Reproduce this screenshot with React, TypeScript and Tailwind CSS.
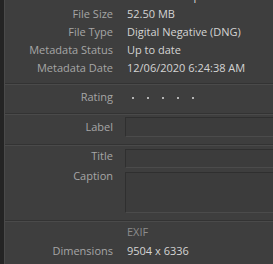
import React from 'react';

// Metadata panel rows (first one sits under the top edge, only its foot shows)
const fileRows = [
  { label: 'Folder', value: 'Pictures Sample' },
  { label: 'File Size', value: '52.50 MB' },
  { label: 'File Type', value: 'Digital Negative (DNG)' },
  { label: 'Metadata Status', value: 'Up to date' },
  { label: 'Metadata Date', value: '12/06/2020 6:24:38 AM' },
];

function Separator() {
  return (
    <div className="flex flex-col">
      <div className="h-px bg-[#333333]" />
      <div className="h-px bg-[#4a4a4a]" />
    </div>
  );
}

function Field({ className }: { className: string }) {
  return (
    <div
      className={`flex-1 border-t border-l border-b border-[#2f2f2f] border-b-[#4b4b4b] bg-[#3c3c3c] ${className}`}
    />
  );
}

export default function App() {
  return (
    <div
      className="flex h-[264px] w-[273px] overflow-hidden bg-[#3e3e3e] text-[11px] leading-[18px]"
      style={{ fontFamily: '"Open Sans", "Noto Sans", sans-serif' }}
    >
      <div className="w-[4px] bg-[#242424]" />
      <div className="w-px bg-[#4a4a4a]" />
      <div className="flex flex-1 flex-col">
        <div className="-mt-[13px] flex flex-col pb-[6px]">
          {fileRows.map(row => (
            <div key={row.label} className="flex h-[18px] items-center">
              <span className="w-[108px] text-right text-[#a6a6a6]">
                {row.label}
              </span>
              <span className="ml-[14px] text-[#d4d4d4]">{row.value}</span>
            </div>
          ))}
        </div>
        <Separator />

        <div className="flex h-[28px] items-start pt-[3px]">
          <span className="w-[108px] text-right text-[#a6a6a6]">Rating</span>
          <div className="ml-[19px] mt-[9px] flex gap-[13px]">
            {[0, 1, 2, 3, 4].map(i => (
              <span key={i} className="h-[2px] w-[2px] bg-[#b4b4b4]" />
            ))}
          </div>
        </div>
        <Separator />

        <div className="flex items-stretch pt-[2px] pb-[7px]">
          <span className="flex w-[108px] items-center justify-end text-[#a6a6a6]">
            Label
          </span>
          <Field className="ml-[12px] h-[20px]" />
        </div>
        <Separator />

        <div className="flex pt-[3px]">
          <span className="-mt-[2px] w-[108px] text-right text-[#a6a6a6]">
            Title
          </span>
          <Field className="ml-[12px] h-[19px]" />
        </div>
        <div className="flex pt-[4px] pb-[7px]">
          <span className="-mt-[5px] w-[108px] text-right text-[#a6a6a6]">
            Caption
          </span>
          <Field className="ml-[12px] h-[41px]" />
        </div>
        <Separator />

        <div className="flex flex-col pt-[1px]">
          <div className="flex h-[18px] items-center">
            <span className="w-[108px]" />
            <span className="ml-[14px] text-[#8c8c8c]">EXIF</span>
          </div>
          <div className="flex h-[20px] items-center">
            <span className="w-[108px] text-right text-[#a6a6a6]">
              Dimensions
            </span>
            <span className="ml-[14px] text-[#d4d4d4]">9504 x 6336</span>
          </div>
        </div>
      </div>
    </div>
  );
}
